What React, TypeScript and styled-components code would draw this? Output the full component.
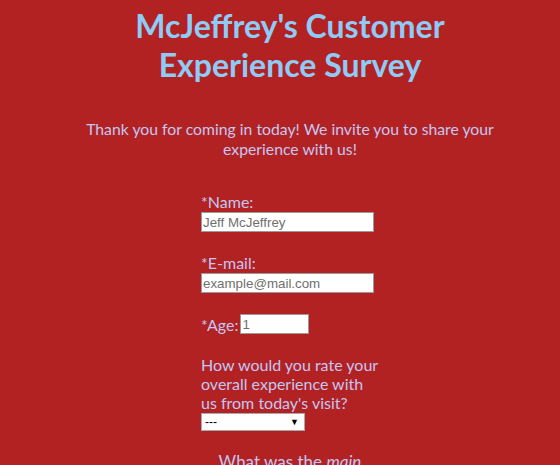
import React from "react";
import styled, { createGlobalStyle } from "styled-components";

const Global = createGlobalStyle`
  html, body { margin: 0; padding: 0; background: #b22222; }
  body { font-family: Lato, "Open Sans", sans-serif; overflow: hidden; }
`;

const Page = styled.div`
  width: 560px;
  height: 465px;
  background: #b22222;
  display: flex;
  flex-direction: column;
  align-items: center;
  padding-left: 20px;
  box-sizing: border-box;
  overflow: hidden;
`;

const Title = styled.h1`
  margin: 6px 0 0;
  width: 440px;
  text-align: center;
  font-size: 32px;
  font-weight: 700;
  line-height: 39px;
  color: #8ecbf7;
`;

const Intro = styled.p`
  margin: 35px 0 0;
  width: 440px;
  text-align: center;
  font-size: 15.77px;
  line-height: 20px;
  color: #c4c6f2;
`;

const Form = styled.form`
  margin-top: 33px;
  width: 178px;
  display: flex;
  flex-direction: column;
  gap: 21px;
  color: #c4c6f2;
  font-size: 16px;
`;

const Field = styled.div<{ $inline?: boolean }>`
  display: flex;
  flex-direction: ${(p) => (p.$inline ? "row" : "column")};
  align-items: ${(p) => (p.$inline ? "center" : "flex-start")};
  gap: ${(p) => (p.$inline ? "2px" : "1px")};
`;

const Label = styled.label`
  line-height: 19px;
`;

const TextInput = styled.input<{ $w: number }>`
  width: ${(p) => p.$w}px;
  height: 20px;
  box-sizing: border-box;
  border: 1px solid #9a9a9a;
  padding: 1px 1px;
  font-family: Arial, "Liberation Sans", sans-serif;
  font-size: 13.33px;
  background: #fff;
  color: #222;
  outline: none;
  &::placeholder { color: #707070; }
`;

const Select = styled.div`
  width: 104px;
  height: 18px;
  box-sizing: border-box;
  background: #fff;
  border: 1px solid #a9a9a9;
  display: flex;
  align-items: center;
  justify-content: space-between;
  padding: 0 5px 0 3px;
  font-family: Arial, "Liberation Sans", sans-serif;
  font-size: 12px;
  color: #000;
`;

const Arrow = styled.span`
  font-size: 9px;
`;

const Question = styled.div`
  line-height: 19px;
`;

const Next = styled.div`
  text-align: center;
  font-size: 17px;
  line-height: 20px;
`;

export default function App() {
  return (
    <>
      <Global />
      <Page>
        <Title>McJeffrey's Customer Experience Survey</Title>
        <Intro>
          Thank you for coming in today! We invite you to share your experience with us!
        </Intro>
        <Form onSubmit={(e) => e.preventDefault()}>
          <Field>
            <Label>*Name:</Label>
            <TextInput $w={173} placeholder="Jeff McJeffrey" />
          </Field>
          <Field>
            <Label>*E-mail:</Label>
            <TextInput $w={173} placeholder="example@mail.com" />
          </Field>
          <Field $inline>
            <Label>*Age:</Label>
            <TextInput $w={69} placeholder="1" />
          </Field>
          <Field>
            <Question>How would you rate your overall experience with us from today's visit?</Question>
            <Select>
              <span>---</span>
              <Arrow>▼</Arrow>
            </Select>
          </Field>
          <Next>
            What was the <em>main</em>
          </Next>
        </Form>
      </Page>
    </>
  );
}
